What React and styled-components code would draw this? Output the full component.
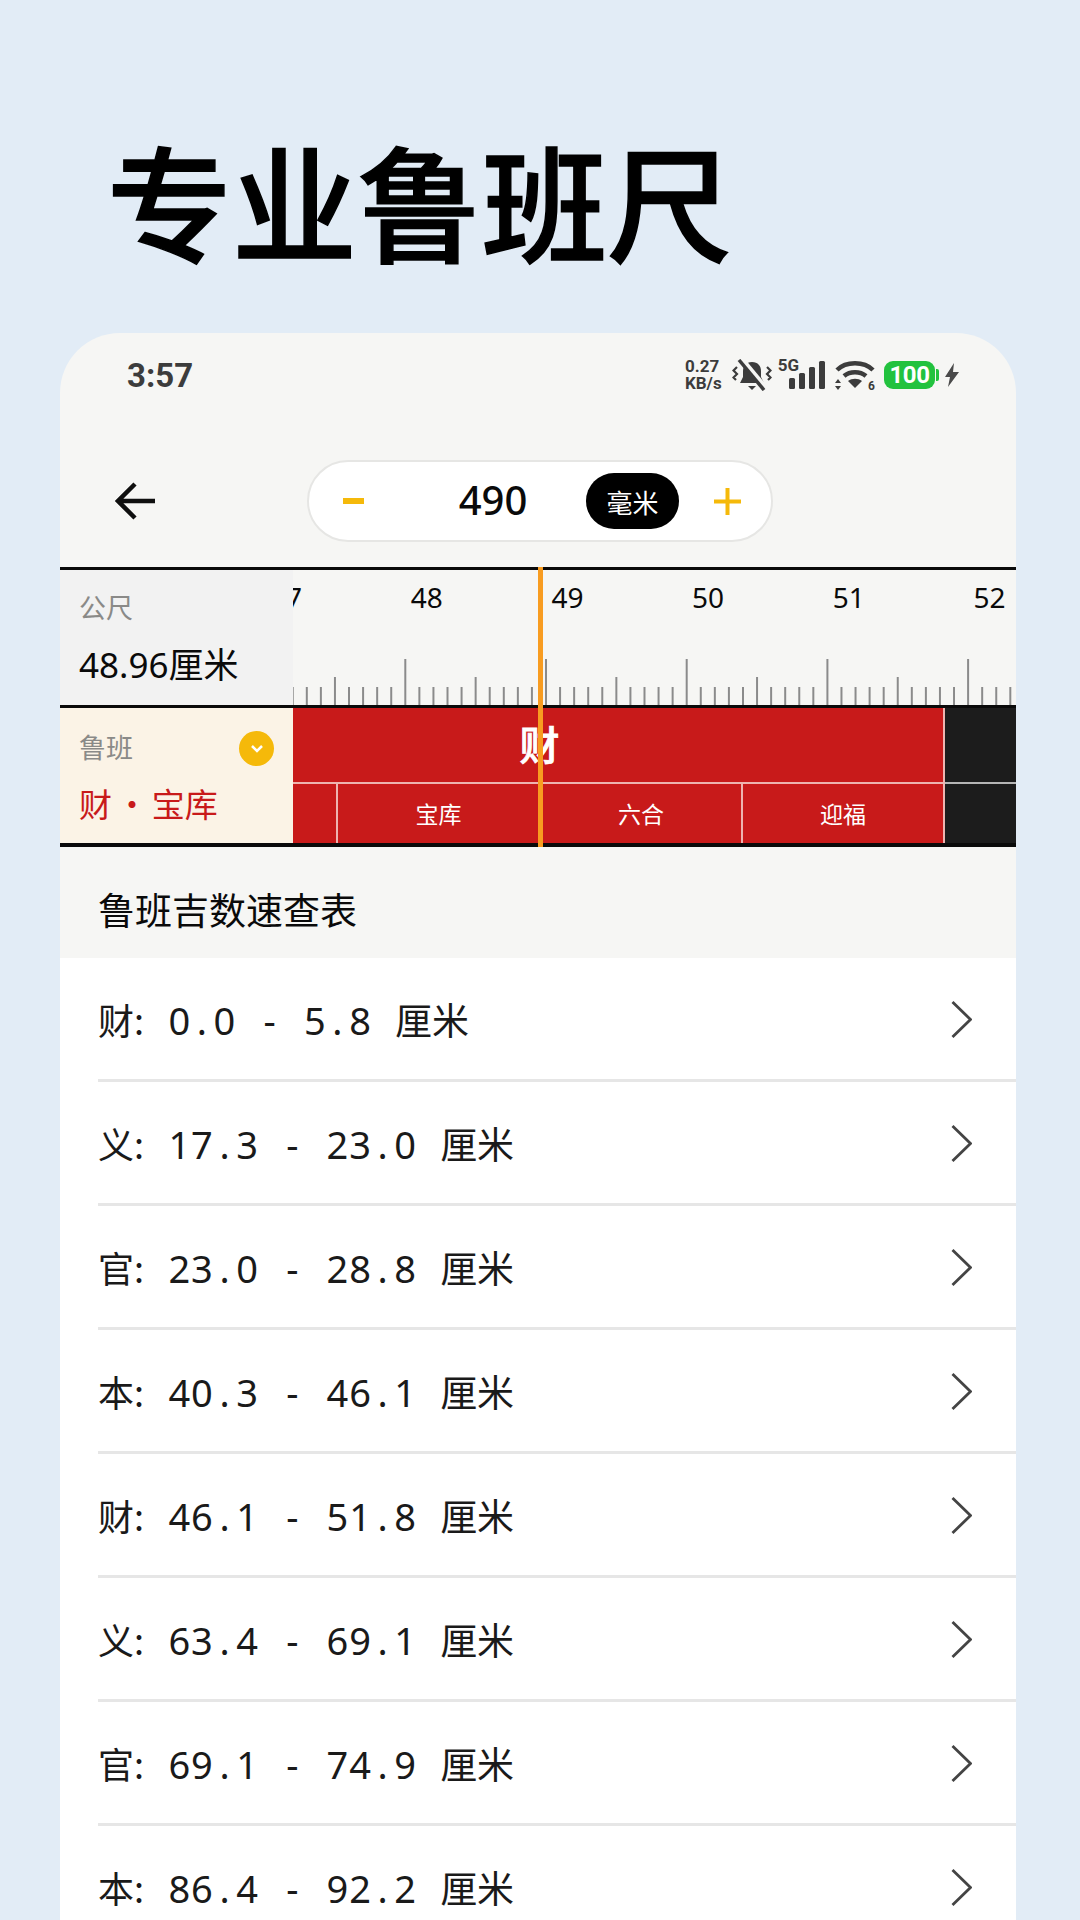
import React from 'react';
import styled, { createGlobalStyle } from 'styled-components';

const GlobalStyle = createGlobalStyle`
  html, body {
    margin: 0;
    padding: 0;
  }
  body {
    width: 1080px;
    height: 1920px;
    overflow: hidden;
    font-family: "Noto Sans", "Noto Sans CJK SC", sans-serif;
  }
`;

const CJK = `"Noto Sans", "Noto Sans CJK SC", sans-serif`;
const YELLOW = '#f5b90a';
const RED = '#c81a1a';

const Page = styled.div`
  width: 1080px;
  height: 1920px;
  overflow: hidden;
  background: #e2ecf6;
  box-sizing: border-box;
  padding: 118px 64px 0 60px;
`;

const Headline = styled.h1`
  margin: 0 0 53px 47px;
  height: 162px;
  font-family: "Noto Sans CJK SC", sans-serif;
  font-size: 125px;
  line-height: 162px;
  font-weight: 500;
  -webkit-text-stroke: 1.5px #000;
  color: #000;
  white-space: nowrap;
`;

const Card = styled.div`
  background: #f6f6f4;
  border-radius: 60px 60px 0 0;
  overflow: hidden;
  height: 1600px;
`;

const StatusBar = styled.div`
  height: 84px;
  margin-bottom: 18px;
  padding: 0 57px 0 67px;
  display: flex;
  align-items: center;
  justify-content: space-between;
`;

const Clock = styled.span`
  font-family: "Roboto", sans-serif;
  font-size: 33px;
  font-weight: 700;
  color: #3c3c3c;
`;

const StatusIcons = styled.div`
  display: flex;
  align-items: center;
  height: 44px;
`;

const Speed = styled.div`
  font-family: "Roboto", sans-serif;
  font-size: 17px;
  line-height: 17px;
  font-weight: 700;
  color: #3c3c3c;
  text-align: left;
  margin-right: 10px;
`;

const FiveG = styled.span`
  font-family: "Roboto", sans-serif;
  font-size: 17px;
  font-weight: 700;
  color: #3c3c3c;
  align-self: flex-start;
  line-height: 20px;
  margin: 2px -10px 0 6px;
`;

const SignalGap = styled.span`
  width: 9px;
  flex: none;
`;

const Battery = styled.div`
  width: 51px;
  height: 28px;
  border-radius: 9px;
  background: #22c23e;
  color: #fff;
  font-family: "Roboto", sans-serif;
  font-size: 24px;
  font-weight: 700;
  display: flex;
  align-items: center;
  justify-content: center;
  letter-spacing: -0.5px;
  margin-left: 8px;
`;

const BatteryCap = styled.i`
  width: 3px;
  height: 12px;
  border-radius: 0 2px 2px 0;
  background: #22c23e;
  margin: 0 6px 0 1px;
`;

const Header = styled.div`
  height: 132px;
  position: relative;
  display: flex;
  align-items: center;
  justify-content: center;
  padding-left: 4px;
`;

const BackButton = styled.div`
  position: absolute;
  left: 55px;
  top: 50%;
  transform: translateY(-50%);
  width: 40px;
  height: 38px;
  display: flex;
`;

const Stepper = styled.div`
  width: 466px;
  height: 82px;
  box-sizing: border-box;
  background: #fff;
  border: 2px solid #e6e6e4;
  border-radius: 41px;
  display: flex;
  align-items: center;
  padding: 0 28px 0 34px;
`;

const Minus = styled.i`
  width: 21px;
  height: 6px;
  flex: none;
  background: ${YELLOW};
`;

const Value = styled.span`
  width: 222px;
  flex: none;
  text-align: center;
  padding-left: 36px;
  margin-bottom: 3px;
  box-sizing: border-box;
  font-size: 40px;
  font-weight: 500;
  color: #0a0a0a;
`;

const UnitPill = styled.span`
  width: 93px;
  height: 56px;
  flex: none;
  border-radius: 28px;
  background: #000;
  color: #fff;
  font-family: "Noto Sans CJK SC", sans-serif;
  font-size: 26px;
  display: flex;
  align-items: center;
  justify-content: center;
`;

const Plus = styled.div`
  width: 27px;
  height: 27px;
  margin-left: 35px;
  display: flex;
`;

const Rule = styled.div`
  position: relative;
  border-top: 3px solid #0a0a0a;
  border-bottom: 4px solid #0a0a0a;
`;

const Needle = styled.div`
  position: absolute;
  left: 478px;
  top: -3px;
  bottom: -4px;
  width: 5px;
  background: #f89c20;
  z-index: 2;
`;

const RuleRow = styled.div`
  display: flex;
  height: ${p => p.$height}px;
`;

const Separator = styled.div`
  height: 3px;
  background: #0a0a0a;
`;

const SideCell = styled.div`
  width: 233px;
  flex: none;
  box-sizing: border-box;
  padding: ${p => p.$pad}px 20px 0 19px;
  background: ${p => p.$bg};
  position: relative;
`;

const SideLabel = styled.div`
  font-family: "Noto Sans CJK SC", sans-serif;
  font-size: 27px;
  line-height: 38px;
  color: #8a8a88;
`;

const Reading = styled.div`
  font-family: ${CJK};
  font-size: 35px;
  line-height: 50px;
  margin-top: 14px;
  color: #0a0a0a;
  white-space: nowrap;
`;

const Verdict = styled.div`
  font-family: "Noto Sans CJK SC", sans-serif;
  font-size: 33px;
  line-height: 48px;
  margin-top: 13px;
  color: ${RED};
  white-space: pre;
  word-spacing: -4px;
`;

const Dropdown = styled.div`
  position: absolute;
  right: 19px;
  top: 23px;
  width: 35px;
  height: 35px;
  border-radius: 50%;
  background: ${YELLOW};
  display: flex;
  align-items: center;
  justify-content: center;
`;

const Scale = styled.div`
  flex: 1;
  min-width: 0;
  overflow: hidden;
  display: flex;
  flex-direction: column;
  justify-content: space-between;
`;

const ScaleNumbers = styled.div`
  display: flex;
  margin-left: -23px;
  padding-top: 8px;
`;

const ScaleNumber = styled.span`
  flex: none;
  width: 140.7px;
  font-size: 28px;
  line-height: 38px;
  color: #0a0a0a;
`;

const Track = styled.div`
  flex: 1;
  min-width: 0;
  display: flex;
`;

const Block = styled.div`
  display: flex;
  flex-direction: column;
  background: ${p => p.$color};
  width: ${p => p.$width || 'auto'};
  flex: ${p => (p.$width ? 'none' : '1')};
  border-right: ${p => (p.$width ? '2px solid #eeb4b0' : 'none')};
  box-sizing: border-box;
`;

const BlockTop = styled.div`
  height: 70px;
  border-bottom: 2px solid ${p => p.$line};
  padding-right: ${p => p.$shift || 0}px;
  padding-bottom: 4px;
  display: flex;
  align-items: center;
  justify-content: center;
  color: #fff;
  font-family: "Noto Sans CJK SC", sans-serif;
  font-size: 40px;
  font-weight: 500;
  -webkit-text-stroke: 0.8px #fff;
`;

const BlockBottom = styled.div`
  flex: 1;
  display: flex;
`;

const Division = styled.div`
  width: ${p => p.$width}px;
  flex: none;
  box-sizing: border-box;
  border-right: ${p => (p.$plain ? 'none' : '2px solid #eeb4b0')};
  display: flex;
  align-items: center;
  justify-content: center;
  padding-bottom: 2px;
  color: #fff;
  font-family: "Noto Sans CJK SC", sans-serif;
  font-size: 23px;
`;

const SectionTitle = styled.div`
  height: 111px;
  box-sizing: border-box;
  padding: 34px 0 0 38px;
  font-family: "Noto Sans CJK SC", sans-serif;
  font-size: 37px;
  line-height: 56px;
  color: #0a0a0a;
`;

const List = styled.div`
  background: #fff;
  padding-left: 38px;
`;

const Row = styled.div`
  height: 124px;
  box-sizing: border-box;
  padding: 1px 44px 0 0;
  border-bottom: 3px solid #e6e6e6;
  display: flex;
  align-items: center;
  justify-content: space-between;
`;

const RowText = styled.span`
  font-family: "Noto Sans", "Noto Sans CJK SC", sans-serif;
  font-size: 38px;
  color: #1a1a1a;
  white-space: pre;
  display: flex;
  align-items: baseline;
`;

const RowKey = styled.span`
  font-family: "Noto Sans CJK SC", sans-serif;
  font-size: 36px;
  width: 70px;
  flex: none;
`;

const Cell = styled.span`
  width: 22.6px;
  flex: none;
  text-align: center;
`;

const Unit = styled.span`
  font-family: "Noto Sans CJK SC", sans-serif;
  font-size: 37px;
  margin-left: 1px;
`;

const ticks = Array.from({ length: 52 }, (_, i) => i - 8);
const numbers = [47, 48, 49, 50, 51, 52];

const ranges = [
  ['财', '0.0 - 5.8 '],
  ['义', '17.3 - 23.0 '],
  ['官', '23.0 - 28.8 '],
  ['本', '40.3 - 46.1 '],
  ['财', '46.1 - 51.8 '],
  ['义', '63.4 - 69.1 '],
  ['官', '69.1 - 74.9 '],
  ['本', '86.4 - 92.2 '],
];

const RulerTicks = () => (
  <svg width="723" height="46" style={{ display: 'block', flex: 'none' }}>
    {ticks.map(i => {
      const x = 112.3 + i * 14.07;
      const h = i % 10 === 0 ? 46 : i % 5 === 0 ? 28 : 18;
      return <line key={i} x1={x} x2={x} y1={46 - h} y2={46} stroke="#8b8b8b" strokeWidth="2" />;
    })}
  </svg>
);

const BellMuted = () => (
  <svg width="40" height="32" viewBox="0 0 40 32" fill="none">
    <path d="M20 3c-6 0-9 4-9 9v6l-3 6h24l-3-6v-6c0-5-3-9-9-9z" fill="#3c3c3c" />
    <path d="M16 27h8l-4 4z" fill="#3c3c3c" />
    <path d="M9 0l25 30" stroke="#f6f6f4" strokeWidth="6" />
    <path d="M7 1l25 30" stroke="#3c3c3c" strokeWidth="3.500" />
    <path d="M5 8l-3.500 3.500 3.500 3.500-3.500 3.500 2.500 2.500M35 8l3.500 3.500-3.500 3.500 3.500 3.500-2.500 2.500" stroke="#3c3c3c" strokeWidth="2.200" />
  </svg>
);

const SignalBars = () => (
  <svg width="37" height="28" viewBox="0 0 37 28" fill="#3c3c3c">
    <rect x="0" y="17" width="6" height="11" rx="1.500" />
    <rect x="10" y="12" width="6" height="16" rx="1.500" />
    <rect x="20" y="6" width="6" height="22" rx="1.500" />
    <rect x="30" y="0" width="6" height="28" rx="1.500" />
  </svg>
);

const Wifi = () => (
  <svg width="41" height="31" viewBox="0 0 41 31" fill="none" overflow="visible">
    <path d="M2 10C11 1 29 1 38 10" stroke="#3c3c3c" strokeWidth="4.500" />
    <path d="M9 16c6-5 16-5 22 0" stroke="#3c3c3c" strokeWidth="4.500" />
    <path d="M13 21c4-3 10-3 14 0l-7 7z" fill="#3c3c3c" />
    <path d="M3 19l-3 4h6zM3 30l-3-4h6z" fill="#3c3c3c" />
    <text x="33" y="30" fontFamily="Roboto, sans-serif" fontSize="12" fontWeight="700" fill="#3c3c3c">6</text>
  </svg>
);

const Bolt = () => (
  <svg width="14" height="24" viewBox="0 0 14 24" fill="#4a4a4a">
    <path d="M9 0L0 14h5l-2 10 11-15H8z" />
  </svg>
);

const ArrowLeft = () => (
  <svg width="40" height="38" viewBox="0 0 40 38" fill="none" stroke="#0f0f0f" strokeWidth="4.500">
    <path d="M20 2L3 19l17 17M3 19h37" />
  </svg>
);

const PlusIcon = () => (
  <svg width="27" height="27" viewBox="0 0 27 27" stroke={YELLOW} strokeWidth="4">
    <path d="M0 13.500h27M13.500 0v27" />
  </svg>
);

const ChevronDown = () => (
  <svg width="14" height="10" viewBox="0 0 14 10" fill="none" stroke="#fff" strokeWidth="2.500">
    <path d="M2 2l5 5 5-5" />
  </svg>
);

const Chevron = () => (
  <svg width="21" height="37" viewBox="0 0 21 37" fill="none" stroke="#444" strokeWidth="2.800">
    <path d="M1.500 1l18 17.500-18 17.500" />
  </svg>
);

const App = () => (
  <>
    <GlobalStyle />
    <Page>
      <Headline>专业鲁班尺</Headline>
      <Card>
        <StatusBar>
          <Clock>3:57</Clock>
          <StatusIcons>
            <Speed>
              0.27
              <br />
              KB/s
            </Speed>
            <BellMuted />
            <FiveG>5G</FiveG>
            <SignalBars />
            <SignalGap />
            <Wifi />
            <Battery>100</Battery>
            <BatteryCap />
            <Bolt />
          </StatusIcons>
        </StatusBar>

        <Header>
          <BackButton>
            <ArrowLeft />
          </BackButton>
          <Stepper>
            <Minus />
            <Value>490</Value>
            <UnitPill>毫米</UnitPill>
            <Plus>
              <PlusIcon />
            </Plus>
          </Stepper>
        </Header>

        <Rule>
          <Needle />
          <RuleRow $height={135}>
            <SideCell $bg="#f2f2f2" $pad={18}>
              <SideLabel>公尺</SideLabel>
              <Reading>48.96厘米</Reading>
            </SideCell>
            <Scale>
              <ScaleNumbers>
                {numbers.map(n => (
                  <ScaleNumber key={n}>{n}</ScaleNumber>
                ))}
              </ScaleNumbers>
              <RulerTicks />
            </Scale>
          </RuleRow>
          <Separator />
          <RuleRow $height={135}>
            <SideCell $bg="#fbf3e6" $pad={20}>
              <SideLabel>鲁班</SideLabel>
              <Dropdown>
                <ChevronDown />
              </Dropdown>
              <Verdict>财 · 宝库</Verdict>
            </SideCell>
            <Track>
              <Block $color={RED} $width="652px">
                <BlockTop $line="#eeb4b0" $shift={157}>财</BlockTop>
                <BlockBottom>
                  <Division $width={45} />
                  <Division $width={203}>宝库</Division>
                  <Division $width={202}>六合</Division>
                  <Division $width={200} $plain>迎福</Division>
                </BlockBottom>
              </Block>
              <Block $color="#1c1c1c">
                <BlockTop $line="#b5b5b5" />
                <BlockBottom />
              </Block>
            </Track>
          </RuleRow>
        </Rule>

        <SectionTitle>鲁班吉数速查表</SectionTitle>
        <List>
          {ranges.map(([key, span], i) => (
            <Row key={i}>
              <RowText>
                <RowKey>{key}:</RowKey>
                {[...span].map((ch, j) => (
                  <Cell key={j}>{ch}</Cell>
                ))}
                <Unit>厘米</Unit>
              </RowText>
              <Chevron />
            </Row>
          ))}
        </List>
      </Card>
    </Page>
  </>
);

export default App;
